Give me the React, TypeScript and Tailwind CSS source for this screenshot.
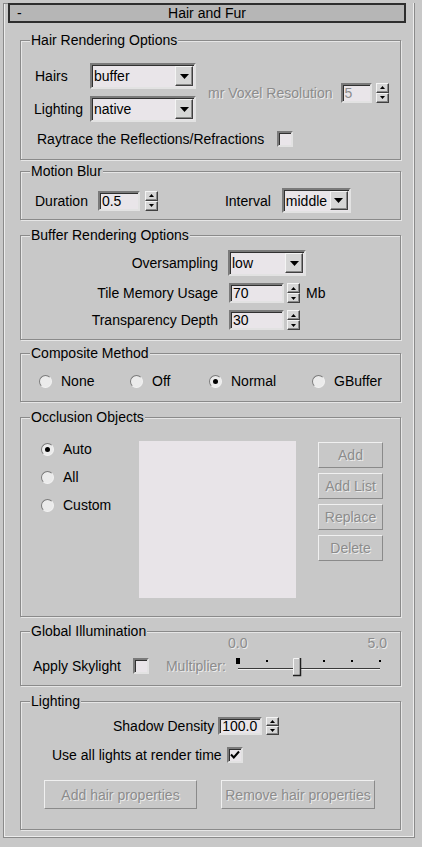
import React from "react"

const sunken =
  "border-2 border-t-[#7a7a7a] border-l-[#7a7a7a] border-b-[#e2e2e2] border-r-[#e2e2e2] shadow-[inset_1px_1px_0_#303030] bg-[#e9e5e9]"
const raised =
  "border border-t-[#f4f4f4] border-l-[#f4f4f4] border-b-[#404040] border-r-[#404040] shadow-[inset_-1px_-1px_0_#8a8a8a] bg-[#d6d6d6]"
const dim = "text-[#8c8c8c] [text-shadow:1px_1px_0_#ececec]"

function Group({ title, className, children }: { title: string; className: string; children?: React.ReactNode }) {
  return (
    <div
      className={
        "relative ml-[16px] w-[381px] border border-[#8a8a8a] shadow-[inset_1px_1px_0_#e6e6e6,1px_1px_0_#e6e6e6] " +
        className
      }
    >
      <span className="absolute left-[9px] top-[-9px] bg-[#c8c8c8] px-[1px] leading-[16px]">{title}</span>
      {children}
    </div>
  )
}

function Arrow({ dir = "down", w = 9 }: { dir?: "up" | "down"; w?: number }) {
  const h = Math.ceil(w / 2)
  return (
    <svg width={w} height={h} viewBox={`0 0 ${w} ${h}`}>
      {dir === "down" ? (
        <polygon points={`0,0 ${w},0 ${w / 2},${h}`} fill="#000" />
      ) : (
        <polygon points={`0,${h} ${w},${h} ${w / 2},0`} fill="#000" />
      )}
    </svg>
  )
}

function Dropdown({ value, className }: { value: string; className: string }) {
  return (
    <div className={"flex items-stretch " + sunken + " " + className}>
      <span className="flex flex-1 items-center pl-[2px] leading-[16px]">{value}</span>
      <span className={"m-px flex w-[18px] items-center justify-center " + raised}>
        <Arrow w={9} />
      </span>
    </div>
  )
}

function Field({ value, className, disabled }: { value: string; className: string; disabled?: boolean }) {
  return (
    <div className={"flex items-center pl-[2px] leading-[16px] " + sunken + " " + className}>
      <span className={disabled ? "text-[#8c8c8c]" : ""}>{value}</span>
    </div>
  )
}

function Spinner({ className }: { className: string }) {
  return (
    <div className={"flex flex-col " + className}>
      <span className={"flex flex-1 items-center justify-center " + raised}>
        <Arrow dir="up" w={5} />
      </span>
      <span className={"flex flex-1 items-center justify-center " + raised}>
        <Arrow dir="down" w={5} />
      </span>
    </div>
  )
}

function Check({ checked, className = "" }: { checked?: boolean; className?: string }) {
  return (
    <span className={"flex h-[16px] w-[16px] items-center justify-center " + sunken + " " + className}>
      {checked && (
        <svg width="10" height="10" viewBox="0 0 10 10">
          <path d="M1 4.5 L3.8 7.5 L9 1.5" stroke="#000" strokeWidth="2" fill="none" />
        </svg>
      )}
    </span>
  )
}

function Radio({ label, on, className = "" }: { label: string; on?: boolean; className?: string }) {
  return (
    <div className={"flex items-center leading-[16px] " + className}>
      <span className="flex h-[13px] w-[13px] items-center justify-center rounded-full border-[1.5px] border-t-[#7a7a7a] border-l-[#7a7a7a] border-b-[#f2f2f2] border-r-[#f2f2f2] bg-[#ebebeb]">
        {on && <span className="h-[5px] w-[5px] rounded-full bg-black" />}
      </span>
      <span className="ml-[9px]">{label}</span>
    </div>
  )
}

function Btn({ label, className }: { label: string; className: string }) {
  return (
    <div
      className={
        "flex items-center justify-center border border-t-[#f0f0f0] border-l-[#f0f0f0] border-b-[#8a8a8a] border-r-[#8a8a8a] bg-[#c8c8c8] " +
        dim +
        " " +
        className
      }
    >
      {label}
    </div>
  )
}

function Slider() {
  return (
    <svg width="148" height="22" viewBox="0 0 148 22">
      <rect x="1" y="3" width="4" height="6" fill="#000" />
      {[31, 88, 116, 144].map((x) => (
        <rect key={x} x={x} y="5" width="2" height="2" fill="#000" />
      ))}
      <line x1="3" y1="13.5" x2="145" y2="13.5" stroke="#3a3a3a" />
      <line x1="3" y1="14.5" x2="145" y2="14.5" stroke="#f0f0f0" />
      <rect x="58" y="3" width="7" height="17" fill="#c8c8c8" />
      <path d="M58.5 20 V3.5 H64" stroke="#f4f4f4" fill="none" />
      <path d="M65.5 3 V20.5 H58" stroke="#202020" strokeWidth="1.5" fill="none" />
    </svg>
  )
}

export default function App() {
  return (
    <div className="h-[847px] w-[422px] bg-[#c8c8c8] pt-[13px] font-['Liberation_Sans',Arial,sans-serif] text-[14px] leading-[16px] text-black">
      <div className="relative ml-[3px] w-[412px] border-x border-b border-[#8a8a8a] pb-[7px] shadow-[inset_1px_0_0_#ececec,inset_-1px_0_0_#ececec,inset_0_-1px_0_#ececec]">
        <span className="absolute left-[-1px] top-0 h-px w-[5px] bg-[#8a8a8a]" />
        <div className="relative -mt-[10px] ml-[4px] flex h-[20px] w-[398px] items-center border-2 border-[#2e2e2e] bg-[#b6b6b6]">
          <span className="absolute left-[7px] top-[0px]">-</span>
          <span className="flex-1 text-center">Hair and Fur</span>
        </div>

        <Group title="Hair Rendering Options" className="mt-[17px] h-[120px] pl-[14px] pt-[22px]">
          <div className="flex items-center">
            <div className="flex flex-col gap-[7px]">
              <div className="flex items-center">
                <span className="w-[55px]">Hairs</span>
                <Dropdown value="buffer" className="h-[26px] w-[106px]" />
              </div>
              <div className="flex items-center">
                <span className="-ml-px w-[56px]">Lighting</span>
                <Dropdown value="native" className="h-[26px] w-[106px]" />
              </div>
            </div>
            <span className={"ml-[12px] " + dim}>mr Voxel Resolution</span>
            <Field value="5" disabled className="ml-[8px] h-[20px] w-[31px]" />
            <Spinner className="ml-[4px] h-[20px] w-[13px]" />
          </div>
          <div className="mt-[9px] flex items-center pl-[2px]">
            <span>Raytrace the Reflections/Refractions</span>
            <Check className="ml-[13px]" />
          </div>
        </Group>

        <Group title="Motion Blur" className="mt-[11px] h-[49px] pl-[14px] pt-[16px]">
          <div className="flex h-[25px] items-center">
            <span>Duration</span>
            <Field value="0.5" className="ml-[10px] h-[20px] w-[42px]" />
            <Spinner className="ml-[5px] h-[20px] w-[13px]" />
            <span className="ml-[67px]">Interval</span>
            <Dropdown value="middle" className="ml-[11px] h-[25px] w-[69px]" />
          </div>
        </Group>

        <Group title="Buffer Rendering Options" className="mt-[15px] h-[105px] pt-[14px]">
          <div className="flex flex-col gap-[7px]">
            <div className="flex items-center">
              <span className="w-[197px] text-right">Oversampling</span>
              <Dropdown value="low" className="ml-[10px] h-[26px] w-[78px]" />
            </div>
            <div className="flex h-[20px] items-center">
              <span className="w-[197px] text-right">Tile Memory Usage</span>
              <Field value="70" className="ml-[11px] h-[20px] w-[55px]" />
              <Spinner className="ml-[3px] h-[20px] w-[13px]" />
              <span className="ml-[6px]">Mb</span>
            </div>
            <div className="flex h-[20px] items-center">
              <span className="w-[197px] text-right">Transparency Depth</span>
              <Field value="30" className="ml-[11px] h-[20px] w-[55px]" />
              <Spinner className="ml-[3px] h-[20px] w-[13px]" />
            </div>
          </div>
        </Group>

        <Group title="Composite Method" className="mt-[13px] h-[49px] pl-[18px] pt-[19px]">
          <div className="flex">
            <Radio label="None" className="w-[91px]" />
            <Radio label="Off" className="w-[79px]" />
            <Radio label="Normal" on className="w-[103px]" />
            <Radio label="GBuffer" />
          </div>
        </Group>

        <Group title="Occlusion Objects" className="mt-[15px] h-[200px] pt-[23px]">
          <div className="flex">
            <div className="flex w-[118px] flex-col gap-[12px] pl-[20px]">
              <Radio label="Auto" on />
              <Radio label="All" />
              <Radio label="Custom" />
            </div>
            <div className="h-[157px] w-[157px] bg-[#e8e4e8]" />
            <div className="ml-[22px] mt-px flex flex-col gap-[5px]">
              <Btn label="Add" className="h-[26px] w-[65px]" />
              <Btn label="Add List" className="h-[26px] w-[65px]" />
              <Btn label="Replace" className="h-[26px] w-[65px]" />
              <Btn label="Delete" className="h-[26px] w-[65px]" />
            </div>
          </div>
        </Group>

        <Group title="Global Illumination" className="mt-[14px] h-[55px] pt-[3px]">
          <div className={"flex w-[366px] justify-between pl-[207px] " + dim}>
            <span>0.0</span>
            <span>5.0</span>
          </div>
          <div className="mt-[4px] flex h-[22px] items-center pl-[12px]">
            <span>Apply Skylight</span>
            <Check className="ml-[12px]" />
            <span className={"ml-[17px] " + dim}>Multiplier:</span>
            <span className="ml-[9px] flex">
              <Slider />
            </span>
          </div>
        </Group>

        <Group title="Lighting" className="mt-[15px] h-[129px] pt-[15px]">
          <div className="flex h-[18px] items-center pl-[92px]">
            <span>Shadow Density</span>
            <Field value="100.0" className="ml-[4px] h-[18px] w-[44px]" />
            <Spinner className="ml-[4px] h-[18px] w-[13px]" />
          </div>
          <div className="mt-[12px] flex items-center pl-[31px]">
            <span>Use all lights at render time</span>
            <Check checked className="ml-[5px]" />
          </div>
          <div className="mt-[17px] flex pl-[23px]">
            <Btn label="Add hair properties" className="h-[29px] w-[153px]" />
            <Btn label="Remove hair properties" className="ml-[24px] h-[29px] w-[154px]" />
          </div>
        </Group>
      </div>
    </div>
  )
}
